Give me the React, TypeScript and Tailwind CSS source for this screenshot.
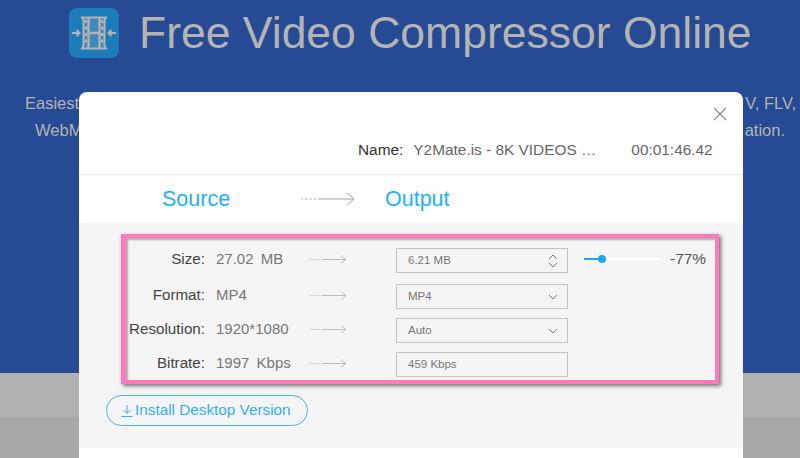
const FlowArrow = ({ className }: { className: string }) => (
  <svg viewBox="0 0 56 14" fill="none" className={className}>
    <path d="M1 7h16" stroke="currentColor" strokeWidth="1.4" strokeDasharray="2 2.4" />
    <path d="M18 7h36M47 1l7 6-7 6" stroke="currentColor" strokeWidth="1.4" />
  </svg>
);

const Chevron = ({ up }: { up?: boolean }) => (
  <svg viewBox="0 0 10 6" fill="none" className="h-[6px] w-[10px] text-[#777777]">
    <path d={up ? 'M1 5l4-4 4 4' : 'M1 1l4 4 4-4'} stroke="currentColor" strokeWidth="1" />
  </svg>
);

const Logo = () => (
  <div className="flex h-[50px] w-[50px] items-center justify-center rounded-[8px] bg-[#1b7cb9]">
    <svg viewBox="0 0 50 50" fill="none" className="h-[50px] w-[50px] text-[#b3b3b3]">
      <path d="M13 9.500h24l-1.500 3v25l1.500 3H13l1.500-3v-25z" stroke="currentColor" strokeWidth="2" fill="currentColor" fillOpacity="0.25" />
      <path d="M19.500 10v30M30.500 10v30M19.500 25h11" stroke="currentColor" strokeWidth="2.400" />
      <path d="M15.500 13.500h2.500M15.500 20h2.500M15.500 26.500h2.500M15.500 33h2.500M32 13.500h2.500M32 20h2.500M32 26.500h2.500M32 33h2.500" stroke="currentColor" strokeWidth="3" />
      <path d="M3 25h7M7.500 22l3 3-3 3M47 25h-7M42.500 22l-3 3 3 3" stroke="currentColor" strokeWidth="2" />
    </svg>
  </div>
);

const rows = [
  { label: 'Size:', value: '27.02 MB', output: '6.21 MB', control: 'spin', gap: 'mt-0' },
  { label: 'Format:', value: 'MP4', output: 'MP4', control: 'select', gap: 'mt-[11px]' },
  { label: 'Resolution:', value: '1920*1080', output: 'Auto', control: 'select', gap: 'mt-[9px]' },
  { label: 'Bitrate:', value: '1997 Kbps', output: '459 Kbps', control: 'none', gap: 'mt-[9px]' },
];

export default function App() {
  return (
    <div className="relative h-[458px] w-[800px] overflow-hidden font-['Liberation_Sans',Arial,sans-serif]">
      {/* Page behind the dialog */}
      <section className="h-[373px] bg-[#264a93] pt-[6px] text-[#b4b4b4]">
        <div className="flex items-center gap-[20px] pl-[69px]">
          <Logo />
          <h1 className="text-[44.500px] leading-[54px]">Free Video Compressor Online</h1>
        </div>
        <div className="mt-[30px] text-[16.500px] leading-[27px]">
          <p className="flex justify-between pl-[25px] pr-[4px]">
            <span>Easiest way to</span>
            <span>V, FLV,</span>
          </p>
          <p className="flex justify-between pl-[35px] pr-[15px]">
            <span>WebM and more</span>
            <span>ation.</span>
          </p>
        </div>
      </section>
      <div className="h-[45px] border-b border-[#a5a5a5] bg-[#b0b0b0]" />
      <div className="h-[40px] bg-[#a9a9a9]" />

      {/* Dialog */}
      <div className="absolute left-[79px] top-[92px] w-[664px] rounded-t-[8px] bg-white">
        <button className="absolute right-[16px] top-[15px] text-[#8a8a8a]">
          <svg viewBox="0 0 14 14" fill="none" className="h-[14px] w-[14px]">
            <path d="M1 1l12 12M13 1L1 13" stroke="currentColor" strokeWidth="1.100" />
          </svg>
        </button>
        <div className="flex h-[83px] items-end border-b border-[#e6e6e6] pb-[15px] pl-[279px] text-[15.400px] leading-[18px]">
          <span className="text-[#333333]">Name:</span>
          <span className="ml-[10px] w-[218px] text-[#666666]">Y2Mate.is - 8K VIDEOS …</span>
          <span className="text-[#666666]">00:01:46.42</span>
        </div>
        <div className="flex h-[48px] items-center pl-[83px] text-[21.500px] text-[#1fb0ff]">
          <span className="w-[138px]">Source</span>
          <FlowArrow className="h-[14px] w-[56px] text-[#c4c4c4]" />
          <span className="ml-[29px]">Output</span>
        </div>

        <div className="h-[225px] bg-[#f5f5f5] pl-[42px] pt-[11px]">
          <div className="h-[150px] w-[598px] border-y-[4.500px] border-l-[5px] border-r-[4px] border-[#ff7abd] pt-[10px] shadow-[2px_2px_4px_rgba(0,0,0,0.55),inset_2px_2px_2px_rgba(0,0,0,0.3)]">
            {rows.map((row) => (
              <div key={row.label} className={`grid h-[25px] grid-cols-[79px_104px_87px_172px_93px_auto] items-center ${row.gap}`}>
                <span className="-mt-[2px] whitespace-nowrap text-right text-[15.200px] text-[#444444]">{row.label}</span>
                <span className="-mt-[3px] ml-[11px] whitespace-nowrap text-[15px] text-[#777777] [word-spacing:3px]">{row.value}</span>
                <FlowArrow className="-mt-[2px] h-[11px] w-[38px] text-[#bbbbbb]" />
                <div className="flex h-[25px] items-center justify-between border border-[#c4c4c4] pl-[11px] pr-[9px] text-[11.500px] text-[#777777]">
                  <span>{row.output}</span>
                  {row.control === 'spin' && (
                    <span className="flex flex-col gap-[2px]">
                      <Chevron up />
                      <Chevron />
                    </span>
                  )}
                  {row.control === 'select' && <Chevron />}
                </div>
                {row.control === 'spin' && (
                  <>
                    <div className="relative -mt-[3px] ml-[16px] h-[2px] w-[77px] bg-white">
                      <div className="h-[2px] w-[18px] bg-[#1fa5f5]" />
                      <div className="absolute left-[14px] top-[-3px] h-[8px] w-[8px] rounded-full bg-[#1fa5f5]" />
                    </div>
                    <span className="-mt-[3px] ml-[9px] whitespace-nowrap text-[15.400px] text-[#555555]">-77%</span>
                  </>
                )}
              </div>
            ))}
          </div>
          <button className="ml-[-15px] mt-[11px] flex h-[31px] w-[202px] items-center gap-[2px] rounded-full border border-[#45b5f8] pl-[14px] text-[15.300px] text-[#35aef8]">
            <svg viewBox="0 0 12 12" fill="none" className="h-[12px] w-[12px]">
              <path d="M6 0v8M2.500 5l3.500 3.500L9.500 5M0.500 11.500h11" stroke="currentColor" strokeWidth="1" />
            </svg>
            Install Desktop Version
          </button>
        </div>
        <div className="h-[20px] bg-white" />
      </div>
    </div>
  );
}
